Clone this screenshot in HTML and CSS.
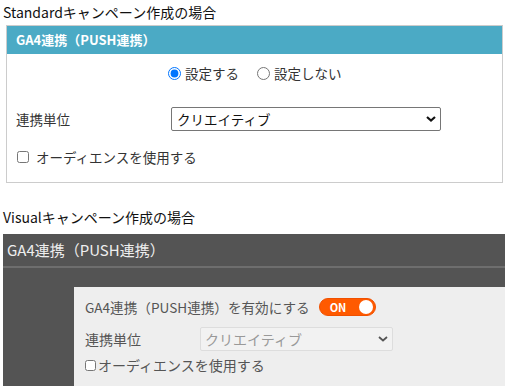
FILE: index.html
```html
<!DOCTYPE html>
<html lang="ja">
<head>
    <meta charset="UTF-8">
    <title>GA4連携</title>
    <link rel="stylesheet" href="styles.css">
</head>
<body>
    <p class="caption caption-first">Standardキャンペーン作成の場合</p>
    <section class="std-box">
        <div class="std-head">GA4連携（PUSH連携）</div>
        <div class="std-body">
            <div class="radio-row">
                <label class="radio"><input type="radio" name="ga4" checked> 設定する</label>
                <label class="radio"><input type="radio" name="ga4"> 設定しない</label>
            </div>
            <div class="field-row">
                <span class="field-label">連携単位</span>
                <div class="select-wrap std-select">
                    <select>
                        <option>クリエイティブ</option>
                    </select>
                    <svg class="chevron" width="10" height="6" viewBox="0 0 10 6">
                        <path d="M1 1 L5 4.5 L9 1" fill="none" stroke="#111" stroke-width="2.2"/>
                    </svg>
                </div>
            </div>
            <label class="check std-check"><input type="checkbox"> オーディエンスを使用する</label>
        </div>
    </section>

    <p class="caption caption-second">Visualキャンペーン作成の場合</p>
    <section class="vis-box">
        <div class="vis-head">GA4連携（PUSH連携）</div>
        <div class="vis-body">
            <div class="vis-panel">
                <div class="vis-row">
                    <span class="vis-title">GA4連携（PUSH連携）を有効にする</span>
                    <span class="toggle"><span class="toggle-text">ON</span><span class="knob"></span></span>
                </div>
                <div class="vis-row vis-field">
                    <span class="vis-label">連携単位</span>
                    <div class="select-wrap vis-select">
                        <select disabled>
                            <option>クリエイティブ</option>
                        </select>
                        <svg class="chevron" width="10" height="6" viewBox="0 0 10 6">
                            <path d="M1 1 L5 4.5 L9 1" fill="none" stroke="#555" stroke-width="1.8"/>
                        </svg>
                    </div>
                </div>
                <label class="check vis-check"><input type="checkbox"> オーディエンスを使用する</label>
            </div>
        </div>
    </section>
</body>
</html>
```

FILE: styles.css
```css
body {
    margin: 0;
    font-family: "Noto Sans CJK JP", "Noto Sans", sans-serif;
    color: #333;
    background: #fff;
}

.caption {
    margin: 0;
    padding-left: 3px;
    font-size: 14px;
    line-height: 20px;
    color: #111;
}

.caption-first {
    padding-top: 2px;
}

.caption-second {
    margin-top: 24px;
}

/* Standard */
.std-box {
    margin: 3px 0 0 6px;
    width: 497px;
    box-sizing: border-box;
    border: 1px solid #ccc;
}

.std-head {
    height: 28px;
    padding-left: 9px;
    background: #4baac5;
    color: #fff;
    font-size: 13px;
    font-weight: bold;
    line-height: 28px;
}

.std-body {
    padding: 7px 0 16px 9px;
    font-size: 13.5px;
}

.radio-row {
    display: flex;
    align-items: center;
    gap: 18px;
    height: 24px;
    padding-left: 152px;
}

.radio {
    display: flex;
    align-items: center;
    gap: 4px;
}

.radio input {
    margin: 0;
    width: 13px;
    height: 13px;
}

.field-row {
    display: flex;
    align-items: center;
    margin-top: 22px;
    height: 24px;
}

.field-label {
    width: 155px;
}

.select-wrap {
    position: relative;
}

.select-wrap select {
    appearance: none;
    display: block;
    margin: 0;
    font-family: inherit;
    box-sizing: border-box;
}

.select-wrap .chevron {
    position: absolute;
    top: 50%;
    margin-top: -3px;
}

.std-select select {
    width: 270px;
    height: 24px;
    padding: 0 0 0 5px;
    border: 1px solid #767676;
    border-radius: 2px;
    background: #fff;
    color: #111;
    font-size: 13.5px;
}

.std-select .chevron {
    right: 5px;
}

.check {
    display: flex;
    align-items: center;
}

.check input {
    margin: 0;
}

.std-check {
    margin-top: 17px;
    height: 18px;
    gap: 7px;
    padding-left: 1px;
}

.std-check input {
    width: 12px;
    height: 12px;
}

/* Visual */
.vis-box {
    margin: 7px 0 0 3px;
    background: #545454;
}

.vis-head {
    padding: 4px 0 4px 4px;
    color: #eee;
    font-size: 15px;
    line-height: 24px;
    border-bottom: 2px solid #6e6e6e;
}

.vis-body {
    padding: 19px 0 3px 71px;
}

.vis-panel {
    padding: 11px 0 14px 11px;
    background: #eee;
    color: #555;
    font-size: 14px;
}

.vis-row {
    display: flex;
    align-items: center;
    height: 18px;
    gap: 9px;
}

.vis-title {
    font-size: 13.6px;
}

.toggle {
    position: relative;
    display: inline-block;
    width: 57px;
    height: 18px;
    box-sizing: border-box;
    border-radius: 9px;
    background: #ff5a00;
    border: 1px solid #f05000;
}

.toggle-text {
    position: absolute;
    left: 10px;
    top: 0;
    color: #fff;
    font-size: 11px;
    font-weight: bold;
    line-height: 16px;
}

.knob {
    position: absolute;
    right: 2px;
    top: 1px;
    width: 14px;
    height: 14px;
    border-radius: 50%;
    background: #fff;
}

.vis-field {
    margin-top: 11px;
    height: 24px;
    gap: 0;
}

.vis-label {
    width: 115px;
}

.vis-select select {
    width: 193px;
    height: 24px;
    padding: 0 0 0 4px;
    border: 1px solid #ddd;
    border-radius: 2px;
    background: #f2f2f2;
    color: #999;
    font-size: 14px;
    opacity: 1;
}

.vis-select .chevron {
    right: 5px;
}

.vis-check {
    margin-top: 7px;
    height: 14px;
    gap: 2px;
}

.vis-check input {
    width: 11px;
    height: 11px;
}
```
